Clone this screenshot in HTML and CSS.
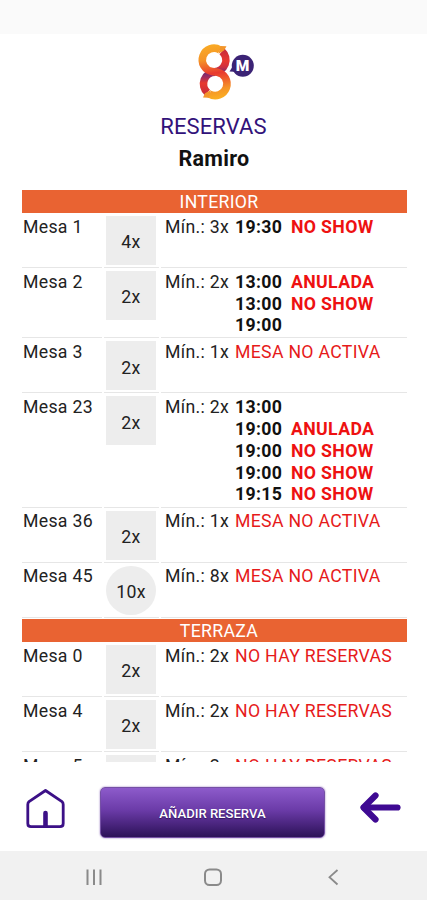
FILE: index.html
```html
<!DOCTYPE html>
<html lang="es">
<head>
<meta charset="utf-8">
<title>Reservas</title>
<link rel="stylesheet" href="styles.css">
</head>
<body>
<div class="status"></div>
<header class="head">
  <svg class="logo" viewBox="0 0 60 60" width="60" height="60">
    <defs>
      <linearGradient id="ribbon" gradientUnits="userSpaceOnUse" x1="15" y1="3" x2="24" y2="57"><stop offset="0" stop-color="#f9aa25"/><stop offset=".25" stop-color="#f59427"/><stop offset=".43" stop-color="#ee5a2c"/><stop offset=".52" stop-color="#e8392f"/><stop offset=".62" stop-color="#ee542c"/><stop offset=".82" stop-color="#f59427"/><stop offset="1" stop-color="#fbb022"/></linearGradient>
      <linearGradient id="side" gradientUnits="userSpaceOnUse" x1="0" y1="7" x2="0" y2="31"><stop offset="0" stop-color="#c52a3c"/><stop offset=".5" stop-color="#e8382f"/><stop offset=".75" stop-color="#cf3040"/><stop offset="1" stop-color="#652a78"/></linearGradient>
      <linearGradient id="low" gradientUnits="userSpaceOnUse" x1="0" y1="29" x2="0" y2="53"><stop offset="0" stop-color="#652a78"/><stop offset=".25" stop-color="#9d2c60"/><stop offset=".5" stop-color="#e8382f"/><stop offset="1" stop-color="#c52a3c"/></linearGradient>
    </defs>
    <path d="M27 9.300A11.700 11.700 0 0 1 19.200 29.700" fill="none" stroke="url(#side)" stroke-width="7.600"/>
    <path d="M20.200 30.100A11.700 11.700 0 0 0 12.400 50.500" fill="none" stroke="url(#low)" stroke-width="7.600"/>
    <path d="M25 7.900A11.700 11.700 0 1 0 17.200 29.500L22.200 30.300A11.700 11.700 0 1 1 14.300 51.900" fill="none" stroke="url(#ribbon)" stroke-width="7.600"/>
    <path d="M25.500 4 31.500 4.200 29 8.500 23.500 11.700Z" fill="#f3952a"/>
    <path d="M14 55.800 8 55.600 10 51.300 16 48Z" fill="#f3952a"/>
    <path d="M38.500 23 34.500 29.500 44 30Z" fill="#3b2375"/>
    <circle cx="47.800" cy="23.700" r="11" fill="#3b2375"/>
    <text x="47.600" y="29.200" text-anchor="middle" class="logo-m">M</text>
  </svg>
  <h1>RESERVAS</h1>
  <h2>Ramiro</h2>
</header>

<main class="list">
  <div class="zone">INTERIOR</div>
  <div class="row"><div class="name">Mesa 1</div><div class="seat"><span>4x</span></div><div class="info"><span class="min">Mín.: 3x</span><div class="slots"><p><b>19:30</b><b class="red">NO SHOW</b></p></div></div></div>
  <div class="row"><div class="name">Mesa 2</div><div class="seat"><span>2x</span></div><div class="info"><span class="min">Mín.: 2x</span><div class="slots"><p><b>13:00</b><b class="red">ANULADA</b></p><p><b>13:00</b><b class="red">NO SHOW</b></p><p><b>19:00</b></p></div></div></div>
  <div class="row"><div class="name">Mesa 3</div><div class="seat"><span>2x</span></div><div class="info"><span class="min">Mín.: 1x</span><span class="note">MESA NO ACTIVA</span></div></div>
  <div class="row"><div class="name">Mesa 23</div><div class="seat"><span>2x</span></div><div class="info"><span class="min">Mín.: 2x</span><div class="slots"><p><b>13:00</b></p><p><b>19:00</b><b class="red">ANULADA</b></p><p><b>19:00</b><b class="red">NO SHOW</b></p><p><b>19:00</b><b class="red">NO SHOW</b></p><p><b>19:15</b><b class="red">NO SHOW</b></p></div></div></div>
  <div class="row"><div class="name">Mesa 36</div><div class="seat"><span>2x</span></div><div class="info"><span class="min">Mín.: 1x</span><span class="note">MESA NO ACTIVA</span></div></div>
  <div class="row"><div class="name">Mesa 45</div><div class="seat round"><span>10x</span></div><div class="info"><span class="min">Mín.: 8x</span><span class="note">MESA NO ACTIVA</span></div></div>
  <div class="zone next">TERRAZA</div>
  <div class="row"><div class="name">Mesa 0</div><div class="seat"><span>2x</span></div><div class="info"><span class="min">Mín.: 2x</span><span class="note">NO HAY RESERVAS</span></div></div>
  <div class="row"><div class="name">Mesa 4</div><div class="seat"><span>2x</span></div><div class="info"><span class="min">Mín.: 2x</span><span class="note">NO HAY RESERVAS</span></div></div>
  <div class="row"><div class="name">Mesa 5</div><div class="seat"><span>2x</span></div><div class="info"><span class="min">Mín.: 2x</span><span class="note">NO HAY RESERVAS</span></div></div>
</main>

<footer class="actions">
  <svg class="home" viewBox="0 0 40 42" width="40" height="42" fill="none" stroke="#3c1087" stroke-linejoin="round" stroke-linecap="round">
    <path d="M20.500 2.500 37 13.700Q38.200 14.700 38.200 16.500V35.500Q38.200 38.700 35 38.700H6Q2.800 38.700 2.800 35.500V16.500Q2.800 14.700 4 13.700Z" stroke-width="2.800"/>
    <path d="M20.500 25V37.500" stroke-width="4.600"/>
  </svg>
  <button class="add" type="button">AÑADIR RESERVA</button>
  <svg class="back" viewBox="0 0 42 32" width="42" height="32" fill="none" stroke="#3f0a93" stroke-linejoin="round" stroke-linecap="round">
    <path d="M16.500 4.500 4.500 16.500 16.500 28.500" stroke-width="6.200"/>
    <path d="M5 16.500H38.500" stroke-width="6.200"/>
  </svg>
</footer>
<nav class="nav">
  <svg viewBox="0 0 427 49" width="427" height="49" fill="none" stroke="#8a8a8a" stroke-width="2">
    <path d="M87.500 18.500V34M94 18.500V34M100.500 18.500V34"/>
    <rect x="205" y="18.500" width="16" height="15.500" rx="4.500"/>
    <path d="M337.500 19 329.500 26.200 337.500 33.500" stroke-width="1.800"/>
  </svg>
</nav>
</body>
</html>
```
FILE: styles.css
```css
* { box-sizing: border-box; margin: 0; padding: 0; }
body {
  width: 427px;
  height: 900px;
  overflow: hidden;
  display: flex;
  flex-direction: column;
  background: #fff;
  color: #222;
  font: 17.7px/21.8px Roboto, sans-serif;
  letter-spacing: 0.3px;
}
.status { flex: none; height: 34px; background: #fafafa; }
.head { flex: none; height: 156px; display: flex; flex-direction: column; align-items: center; padding-top: 8px; }
.logo { flex: none; margin-left: 22px; }
.logo-m { font: 900 15.5px Roboto, sans-serif; fill: #fff; letter-spacing: 0; }
h1 { margin-top: 9px; font-size: 22px; line-height: 32px; font-weight: 400; letter-spacing: 0.1px; color: #32127a; }
h2 { padding-left: 1px; font-size: 21.5px; line-height: 32px; font-weight: 700; color: #111; }
.list { flex: none; height: 572px; margin: 0 20px 0 22px; overflow: hidden; }
.zone { height: 23px; line-height: 24px; background: #e96332; color: #fff; text-align: center; padding-left: 9px; }
.zone.next { margin-top: 1.6px; }
.row { display: grid; grid-template-columns: 80px 55px 1fr; column-gap: 2px; min-height: 55px; }
.row > div { border-bottom: 1px solid #e6e6e6; }
.name { padding: 3.8px 0 0 1px; }
.seat { padding: 3px 0 2px 2px; }
.seat span { display: flex; align-items: center; justify-content: center; width: 50px; height: 49px; padding-top: 5px; background: #ededed; }
.round span { border-radius: 50%; }
.info { display: flex; padding: 3.8px 0 .3px 4px; }
.min { width: 70px; flex: none; white-space: nowrap; }
.slots p { display: flex; }
.slots b { width: 56px; color: #111; white-space: nowrap; }
.slots .red { color: #ee1111; letter-spacing: 0.35px; }
.note { color: #e61a1a; white-space: nowrap; }
.actions { flex: none; height: 89px; display: flex; align-items: flex-start; padding: 25px 26px 0 25px; }
.home { margin-top: 1px; }
.add {
  width: 225px; height: 51px; margin-left: 35px; padding-top: 1px;
  border: 1px solid #7550a5; border-radius: 5px;
  background: linear-gradient(#8d5bcb, #6b3ba8 45%, #2c1158);
  box-shadow: 0 0 2px #8b67b8;
  color: #fff; font: 500 13.1px Roboto, sans-serif; text-shadow: 0 1px 1px #31145d;
}
.back { margin: 4px 0 0 34px; }
.nav { flex: none; height: 49px; background: #f1f1f1; }
.nav svg { display: block; }
```
